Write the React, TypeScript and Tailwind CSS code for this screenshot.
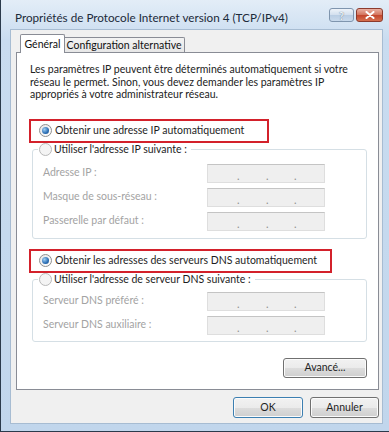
import React from "react";

const btn =
  "flex items-center justify-center rounded-[3px] border text-[10.5px] text-[#1f1f1f] bg-[linear-gradient(#f2f2f2,#ebebeb_50%,#dddddd_50%,#cfcfcf)] shadow-[inset_0_0_0_1px_#fbfbfb]";

const Radio = ({ checked, dim }: { checked?: boolean; dim?: boolean }) => (
  <span
    className={`flex h-[13px] w-[13px] shrink-0 items-center justify-center rounded-full border ${
      dim ? "border-[#b9b9b9] bg-[#f4f4f4]" : "border-[#8e8f8f] bg-[linear-gradient(135deg,#e6e6e6,#ffffff)]"
    }`}
  >
    {checked && (
      <span className="h-[7px] w-[7px] rounded-full bg-[radial-gradient(circle_at_35%_35%,#9fd0f5,#2a6db3_60%,#174b85)]" />
    )}
  </span>
);

const IpBox = () => (
  <div className="flex h-[19px] w-[118px] shrink-0 items-center border border-[#dedede] border-t-[#c4c4c4] bg-[#efefef] pl-[29px] text-[11px] leading-none text-[#8f8f8f]">
    <span className="w-[29px] pt-[5px]">.</span>
    <span className="w-[28px] pt-[5px]">.</span>
    <span className="pt-[5px]">.</span>
  </div>
);

const Row = ({ label, first }: { label: string; first?: string }) => (
  <div className={`flex h-[19px] shrink-0 items-center ${first ?? "mt-[5px]"}`}>
    <span className="w-[164px] whitespace-nowrap text-[10.5px] text-[#a3a3a3]">{label}</span>
    <IpBox />
  </div>
);

const Group = ({
  legend,
  rows,
  className,
  firstGap,
}: {
  legend: string;
  rows: string[];
  className: string;
  firstGap: string;
}) => (
  <fieldset className={`ml-[2px] shrink-0 rounded-[3px] border border-[#d5dfe5] px-[10px] ${className}`}>
    <legend className="-ml-[5px] flex h-[14px] items-center gap-[2px] px-[1px] pr-[4px] text-[10.5px] whitespace-nowrap text-[#1e1e1e]">
      <Radio dim />
      <span>{legend}</span>
    </legend>
    {rows.map((r, i) => (
      <Row key={r} label={r} first={i === 0 ? firstGap : undefined} />
    ))}
  </fieldset>
);

const Choice = ({ text, w, className }: { text: string; w: string; className: string }) => (
  <div
    className={`-ml-[1px] flex h-[24px] shrink-0 items-center gap-[3px] border-2 border-[#d3212b] pl-[8px] text-[10.5px] whitespace-nowrap text-[#1e1e1e] ${w} ${className}`}
  >
    <Radio checked />
    <span>{text}</span>
  </div>
);

export default function App() {
  return (
    <div className="flex h-[432px] w-[389px] flex-col border-b border-l border-[#2b3a4b] bg-[linear-gradient(#e3edf7,#c9dcf0_40px,#c1d6ec)] font-['Lato',sans-serif]">
      <div className="flex h-[29px] shrink-0 pl-[14px] pr-[6px]">
        <span className="mt-[9px] whitespace-nowrap text-[11.7px] leading-[16px] text-[#1c2a3a]">
          Propriétés de Protocole Internet version 4 (TCP/IPv4)
        </span>
        <div className="ml-auto mt-[8px] flex h-[14px] gap-[2px]">
          <div className="flex w-[25px] items-center justify-center rounded-[3px] border border-[#7f95ae] bg-[linear-gradient(#eef3f9,#d2dfee_50%,#b9cde3_50%,#c9daec)] text-[11px] font-bold leading-none text-[#eef3f9] [text-shadow:0_0_1px_#3f5269]">
            ?
          </div>
          <div className="flex w-[27px] items-center justify-center rounded-[3px] border border-[#8c3b2d] bg-[linear-gradient(#eab0a2,#d2735c_50%,#c2432b_50%,#d6704f)]">
            <svg width="10" height="8" viewBox="0 0 10 8">
              <path d="M1.5 1 L8.5 7 M8.5 1 L1.5 7" stroke="#ffffff" strokeWidth="2" strokeLinecap="round" />
            </svg>
          </div>
        </div>
      </div>

      <div className="mb-[7px] ml-[9px] mr-[6px] flex flex-1 flex-col border border-[#a7bcd2] bg-[#f0f0f0]">
        <div className="-mb-[1px] flex h-[23px] shrink-0 items-end pl-[9px] pt-[4px]">
          <div className="relative z-10 flex h-[19px] w-[45px] items-start justify-center rounded-t-[2px] border-x border-t border-[#898c95] bg-white pt-[2px] text-[10.5px] whitespace-nowrap text-[#111]">
            Général
          </div>
          <div className="-ml-[1px] flex h-[16px] w-[121px] items-start justify-center rounded-tr-[2px] border-r border-t border-[#898c95] bg-[linear-gradient(#f3f3f3,#e6e6e6)] text-[10.5px] leading-[15px] whitespace-nowrap text-[#111]">
            Configuration alternative
          </div>
        </div>

        <div className="ml-[5px] mr-[3px] flex h-[338px] shrink-0 flex-col border border-[#898c95] bg-white pl-[13px] pr-[11px]">
          <p className="mt-[10px] shrink-0 whitespace-nowrap text-[10.5px] leading-[12.5px] text-[#222]">
            Les paramètres IP peuvent être déterminés automatiquement si votre
            <br />
            réseau le permet. Sinon, vous devez demander les paramètres IP
            <br />
            appropriés à votre administrateur réseau.
          </p>

          <Choice text="Obtenir une adresse IP automatiquement" w="w-[240px]" className="mt-[18px]" />
          <Group
            legend="Utiliser l'adresse IP suivante :"
            rows={["Adresse IP :", "Masque de sous-réseau :", "Passerelle par défaut :"]}
            className="mt-0 pb-[7px]"
            firstGap="mt-[7px]"
          />

          <Choice
            text="Obtenir les adresses des serveurs DNS automatiquement"
            w="w-[303px]"
            className="mt-[10px]"
          />
          <Group
            legend="Utiliser l'adresse de serveur DNS suivante :"
            rows={["Serveur DNS préféré :", "Serveur DNS auxiliaire :"]}
            className="mt-0 pb-[6px]"
            firstGap="mt-[5px]"
          />

          <div className="mt-[16px] flex shrink-0 justify-end">
            <button className={`${btn} h-[20px] w-[84px] border-[#707070]`}>Avancé...</button>
          </div>
        </div>

        <div className="mt-[7px] flex justify-end gap-[7px] pr-[3px]">
          <button className={`${btn} h-[21px] w-[70px] border-[#3c7fb1] shadow-[inset_0_0_0_1px_#c6e4f7]`}>OK</button>
          <button className={`${btn} h-[21px] w-[69px] border-[#707070]`}>Annuler</button>
        </div>
      </div>
    </div>
  );
}
